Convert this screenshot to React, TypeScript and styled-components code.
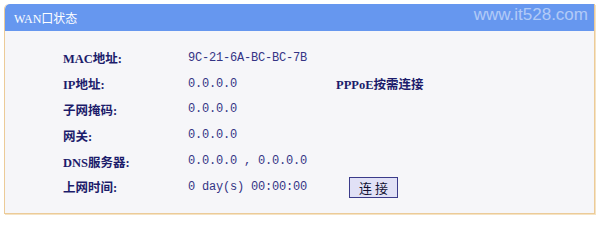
import styled, { createGlobalStyle } from 'styled-components'

const GlobalStyle = createGlobalStyle`
    html, body {
        margin: 0;
        padding: 0;
        background: #ffffff;
    }
    body {
        font-family: "Liberation Mono", "Noto Sans CJK SC", monospace;
    }
`

type Row = {
    label: string
    value: string
    extra?: string
    button?: string
}

const rows: Row[] = [
    { label: 'MAC地址:', value: '9C-21-6A-BC-BC-7B' },
    { label: 'IP地址:', value: '0.0.0.0', extra: 'PPPoE按需连接' },
    { label: '子网掩码:', value: '0.0.0.0' },
    { label: '网关:', value: '0.0.0.0' },
    { label: 'DNS服务器:', value: '0.0.0.0 , 0.0.0.0' },
    { label: '上网时间:', value: '0 day(s) 00:00:00', button: '连 接' },
]

const App = () => {
    return (
        <Page>
            <GlobalStyle />
            <Panel>
                <Header>
                    <HeaderTitle>WAN口状态</HeaderTitle>
                    <Watermark>www.it528.com</Watermark>
                </Header>
                <Body>
                    {rows.map((row) => (
                        <InfoRow key={row.label}>
                            <Label>{row.label}</Label>
                            <Value>{row.value}</Value>
                            {row.extra && <Extra>{row.extra}</Extra>}
                            {row.button && <ConnectButton>{row.button}</ConnectButton>}
                        </InfoRow>
                    ))}
                </Body>
            </Panel>
        </Page>
    )
}

const Page = styled.div`
    width: 600px;
    height: 225px;
    padding: 4px 4px 0 4px;
    box-sizing: border-box;
`

const Panel = styled.div`
    width: 591px;
    height: 210px;
    box-sizing: border-box;
    border: 1px solid #eccb98;
    border-top: none;
    border-radius: 5px 0 0 0;
    background: #f6f6f9;
    overflow: hidden;
    box-shadow: 1px 1px 0 #f5e3c4;
`

const Header = styled.div`
    height: 27px;
    background: #6697ef;
    display: flex;
    align-items: center;
    justify-content: space-between;
    padding: 0 6px 0 9px;
    border-radius: 5px 0 0 0;
`

const HeaderTitle = styled.div`
    color: #ffffff;
    font-size: 12px;
    font-family: "Liberation Serif", "Noto Sans CJK SC", serif;
`

const Watermark = styled.div`
    color: rgba(255, 255, 255, 0.5);
    font-size: 17px;
    font-family: "Liberation Sans", Arial, sans-serif;
    margin-top: -6px;
`

const Body = styled.div`
    padding: 14px 0 0 58px;
    display: flex;
    flex-direction: column;
`

const InfoRow = styled.div`
    height: 25.8px;
    display: flex;
    align-items: center;
`

const Label = styled.div`
    width: 125px;
    color: #1c1c6b;
    font-weight: bold;
    font-size: 12.5px;
    font-family: "Liberation Serif", "Noto Sans CJK SC", serif;
`

const Value = styled.div`
    width: 148px;
    color: #343485;
    font-size: 12px;
    font-family: "Liberation Mono", "Noto Sans CJK SC", monospace;
    white-space: pre;
    letter-spacing: -0.2px;
`

const Extra = styled.div`
    color: #1c1c6b;
    font-weight: bold;
    font-size: 12.5px;
    font-family: "Liberation Serif", "Noto Sans CJK SC", serif;
`

const ConnectButton = styled.button`
    margin-left: 13px;
    margin-top: 2px;
    width: 49px;
    height: 21px;
    padding: 0;
    border: 1px solid #3b3b8a;
    background: #e1e1f6;
    color: #111133;
    font-size: 13px;
    font-family: "Noto Sans CJK SC", sans-serif;
    line-height: 19px;
`

export default App
